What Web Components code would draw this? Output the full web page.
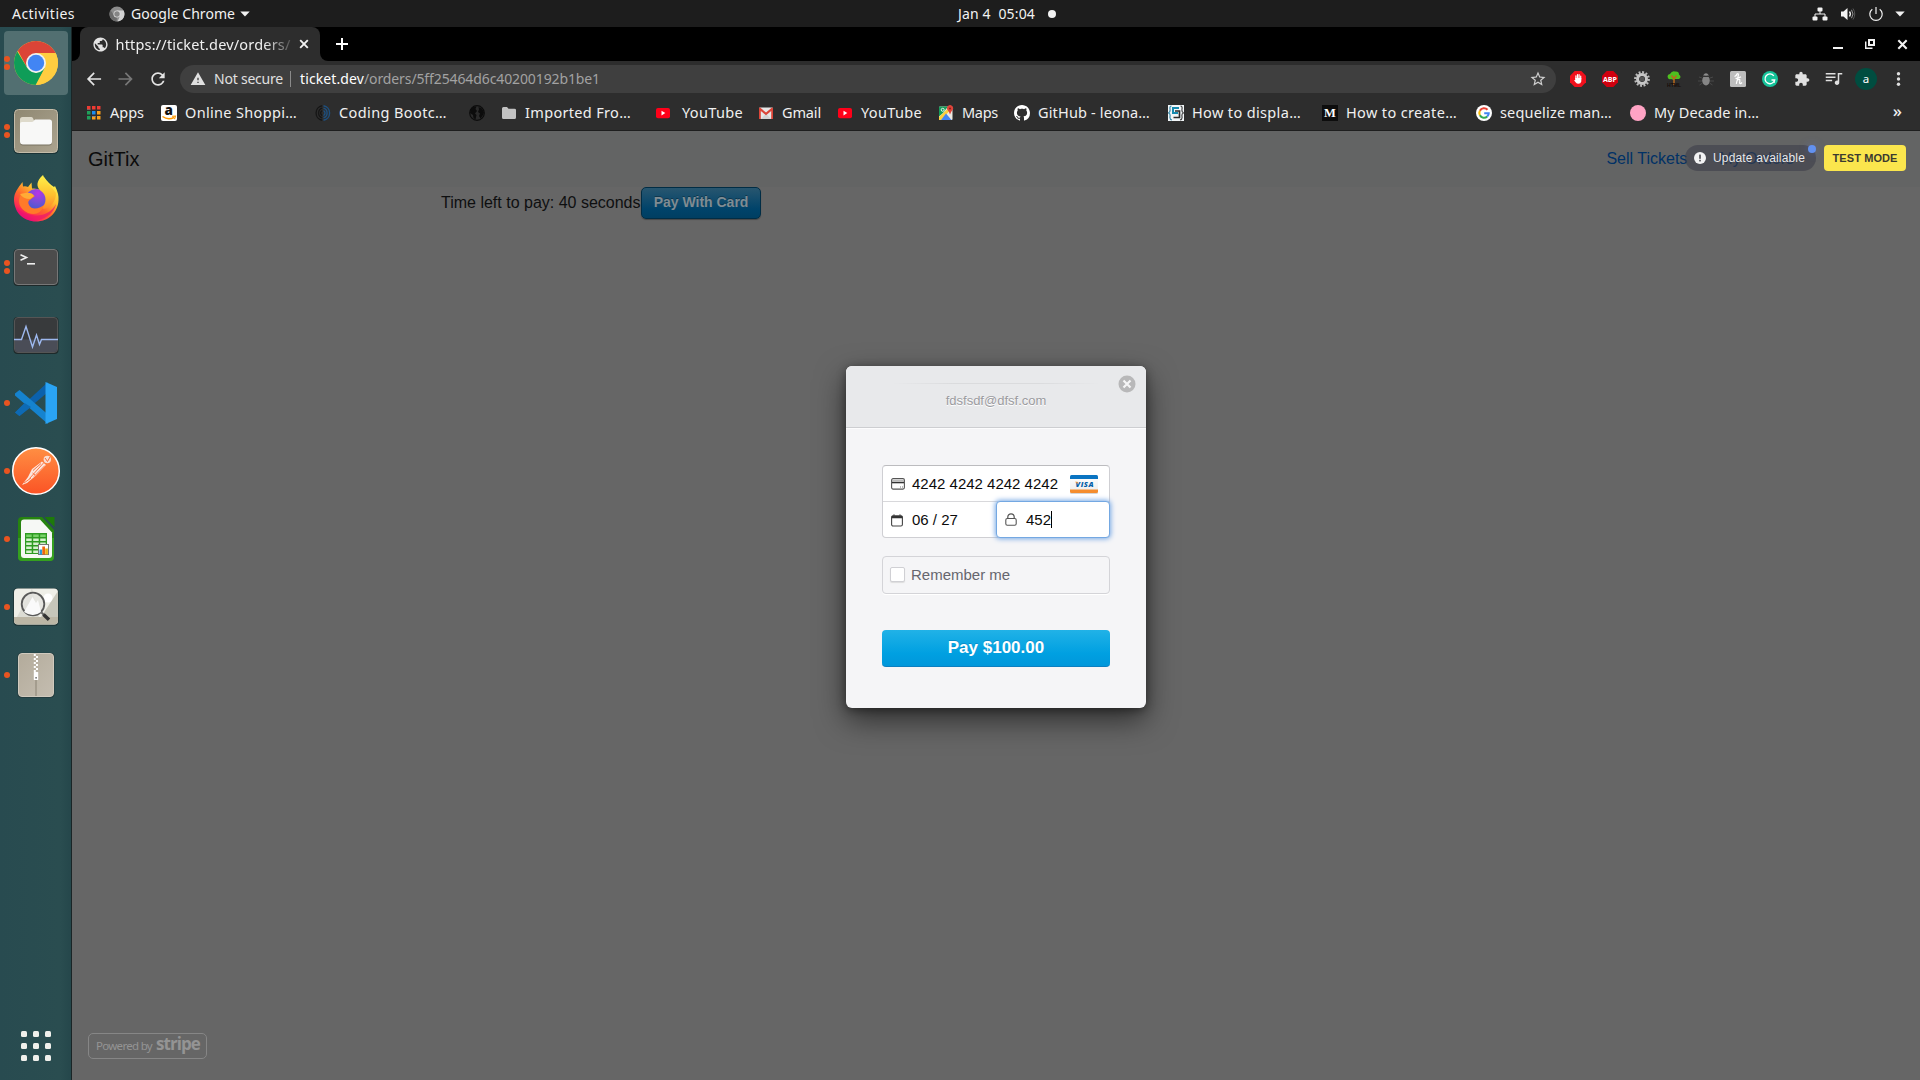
<!DOCTYPE html>
<html lang="en">
<head>
<meta charset="utf-8">
<title>GitTix</title>
<style>
html,body{margin:0;height:100%;overflow:hidden;background:#666;font-family:"Noto Sans","Open Sans",sans-serif}
</style>
</head>
<body>
<desktop-screen></desktop-screen>
<script>
const ICONS = {
  /* dock */
  chrome: ['0 0 64 64', `<clipPath id="c"><circle cx="32" cy="32" r="22"/></clipPath><g clip-path="url(#c)"><rect width="64" height="64" fill="#ffcd40"/><path d="M32 22H60V0H0V16L14 20L23.3 37Z" fill="#db4437"/><path d="M13 20L23.3 37L32 42L41 37L29.500 60H0V18Z" fill="#0f9d58"/><path d="M40.700 37L30 57V60H64V22H32Z" fill="#ffcd40"/></g><circle cx="32" cy="32" r="10" fill="#f1f1f1"/><circle cx="32" cy="32" r="8.200" fill="#4285f4"/>`],
  files: ['0 0 64 64', `<linearGradient id="g" x2="1" y2="1"><stop stop-color="#8f8872"/><stop offset="1" stop-color="#aba38f"/></linearGradient><rect x="9.500" y="10" width="45" height="45" rx="4.500" fill="#1b3336"/><rect x="10.500" y="10.500" width="43" height="43" rx="4" fill="url(#g)" stroke="#c4bca9"/><path d="M16 37V20.500Q16 18 18.500 18H27Q28.500 18 29 19.200L30 21.500H45Q48 21.500 48 24V37Z" fill="#dedacb"/><path d="M16 25.500Q16 24 18 24H27.500Q29 24 30 22.500L31 21H45.500Q48 21 48 23.500V43.500Q48 46.500 45 46.500H19Q16 46.500 16 43.500Z" fill="#787260"/><path d="M16 24.500Q16 23 18 23H27.500Q29 23 30 21.500L31 20.500H45.500Q48 20.500 48 23V42.500Q48 45.500 45 45.500H19Q16 45.500 16 42.500Z" fill="#f8f8f7"/>`],
  firefox: ['0 0 64 64', `<linearGradient id="a" x1=".85" y1=".1" x2=".25" y2=".95"><stop stop-color="#fff44f"/><stop offset=".35" stop-color="#ffbd2f"/><stop offset=".6" stop-color="#ff6a2b"/><stop offset=".85" stop-color="#ff2f50"/><stop offset="1" stop-color="#e3007d"/></linearGradient><radialGradient id="b" cx=".6" cy=".2" r=".9"><stop stop-color="#b833e8"/><stop offset=".5" stop-color="#7450d6"/><stop offset="1" stop-color="#3b5bd0"/></radialGradient><linearGradient id="d" x2="0" y2="1"><stop stop-color="#fff14a"/><stop offset=".6" stop-color="#ffbf2e" /><stop offset="1" stop-color="#ff8a2b"/></linearGradient><path d="M18.500 15L19 19.500Q22 19 24 20L27.500 15.500L28 21.500Q33 21 36 23L40 10Q45 17 50 20L51 19Q55 27 54.500 33C54 46 44 54.500 32 54.500S10 45 10 32.500C10 26 14 21 18.500 15Z" fill="url(#a)"/><path d="M12 42C16 52 27 56 37 52.500C47 49 51 42 52 37C47 46 38 50 28 48Q18 46 12 42Z" fill="#ed146f" opacity=".7"/><circle cx="32" cy="32.500" r="10.500" fill="url(#b)"/><path d="M39 8C32 14 32 20 37 24C43 28 43 37 37 41C44 44 52 36 52 26C47 19 42 16 39 8Z" fill="url(#d)"/><path d="M17 27Q25 27 28 28L31 29L26.500 32.500Q23 34 25 38C28 44 36 41 40 38Q36 50 24 46C15 42 13 34 17 27Z" fill="#ff7a29"/><path d="M16 27L21 26Q28 25 30 29L26 32Q19 32 16 27Z" fill="#ffab36"/>`],
  terminal: ['0 0 64 64', `<rect x="9.500" y="14" width="45" height="37" rx="4" fill="#1e292a"/><rect x="10.500" y="14.500" width="43" height="35" rx="3.500" fill="#4c4c4c" stroke="#777"/><path d="M16.500 19.700L22.500 22.500L16.500 25.300" fill="none" stroke="#eee" stroke-width="1.600"/><rect x="23" y="28" width="8" height="1.600" fill="#eee"/>`],
  monitor: ['0 0 64 64', `<rect x="9.500" y="14" width="45" height="37" rx="4" fill="#1e292a"/><rect x="10.500" y="14.500" width="43" height="35" rx="3.500" fill="#383a3c" stroke="#555"/><path d="M11 36.500H53V46Q53 49 50 49H14Q11 49 11 46Z" fill="#4a4d57"/><path d="M10 36.500H17.500L22 23.500L28.500 44L32.500 32L35.500 41.500L37.500 36.500H54" fill="none" stroke="#9db8ee" stroke-width="1.400"/>`],
  vscode: ['0 0 64 64', `<path d="M11 41.500L15.500 45L44 21V11L11 41.500Z" fill="#0b61ac"/><path d="M11 22.500L15.500 19L44 43.500V53L11 24.500Z" fill="#1583cf"/><path d="M11 41.500L15.500 45L27 36L20.500 32Z" fill="#0e6ab4"/><path d="M41.500 11L53 16V48L41.500 53Z" fill="#2aa4f4"/>`],
  postman: ['0 0 64 64', `<linearGradient id="p" x2="0" y2="1"><stop stop-color="#ff8f43"/><stop offset="1" stop-color="#fb5325"/></linearGradient><circle cx="32" cy="32" r="23.300" fill="url(#p)" stroke="#fff" stroke-width="1.500"/><circle cx="43.300" cy="20.500" r="3.700" fill="#f9ddd0"/><path d="M41 19L43.500 22.500L46 18" stroke="#fb6b35" fill="none"/><path d="M38 22.500L42 26L32 36.500L23 44L18 46L24 38L28 30Z" fill="#fbe6dc"/><path d="M39.500 24L25.500 39.500M37 24.500L29 31.500M41 26.500L30 37.500M28.500 34L31 36M20 44L27 39" stroke="#fa6a35" fill="none" stroke-width=".9"/>`],
  calc: ['0 0 64 64', `<path d="M18 10H38L50 23V50Q50 54 46 54H18Q14 54 14 50V14Q14 10 18 10Z" fill="#26840f"/><path d="M14 31H50V50Q50 54 46 54H18Q14 54 14 50Z" fill="#35a01f"/><path d="M20 12.500H36L48 25.500V48Q48 51 45 51H20Q17 51 17 48V15.500Q17 12.500 20 12.500Z" fill="#f6f8f5"/><path d="M40.500 10H50.500V20Z" fill="#1d7a0a"/><path d="M21 26H43V47H21Z" fill="#2e9b22"/><path d="M22.200 27.500h5.500v2.600h-5.500zm7 0h5.500v2.600h-5.500zm7 0h5.500v2.600h-5.500z" fill="#77d267"/><path d="M22.200 31.500h5.500v2.600h-5.500zm7 0h5.500v2.600h-5.500zm7 0h5.500v2.600h-5.500zm-14 4h5.500v2.600h-5.500zm7 0h5.500v2.600h-5.500zm7 0h5.500v2.600h-5.500zm-14 4h5.500v2.600h-5.500zm7 0h5.500v2.600h-5.500zm-7 4h5.500v2.600h-5.500zm7 0h5.500v2.600h-5.500z" fill="#d5f1cd"/><rect x="34.500" y="37.500" width="10" height="10" fill="#fff" stroke="#777"/><rect x="35.500" y="42.500" width="2.700" height="5" fill="#2b9bd8"/><rect x="38.300" y="39.500" width="2.700" height="8" fill="#f0660e"/><rect x="41.200" y="41.500" width="2.700" height="6" fill="#eeb311"/>`],
  viewer: ['0 0 64 64', `<clipPath id="v"><rect x="10" y="13.500" width="44" height="36" rx="4"/></clipPath><rect x="9" y="13" width="46" height="38" rx="4.500" fill="#20383a"/><g clip-path="url(#v)"><rect x="9" y="13" width="46" height="38" fill="#efefe8"/><path d="M37 42L54 16V42Z" fill="#c7c6ba"/><path d="M28 13.500L13 42H35Z" fill="#dcdcd4"/><path d="M9 42H55V51H9Z" fill="#bcb6a5"/></g><circle cx="44" cy="23" r="4.500" fill="#fff"/><circle cx="29" cy="29" r="11.300" fill="#e4e4df" fill-opacity=".8" stroke="#5a5a5a" stroke-width="1.800"/><path d="M20 37L28.500 22L32 28L34 25L37 37Q29 43 20 37Z" fill="#fafafa"/><path d="M37.500 37.500L40 40" stroke="#666" stroke-width="2"/><path d="M39.500 39.500L45 44.800" stroke="#333" stroke-width="3.500"/>`],
  archive: ['0 0 64 64', `<linearGradient id="z" x2="1" y2="1"><stop stop-color="#b3ab9b"/><stop offset="1" stop-color="#c4bdb0"/></linearGradient><rect x="13.500" y="9.800" width="37" height="45" rx="4" fill="#22393b"/><rect x="14.500" y="10.500" width="35" height="43" rx="3.500" fill="url(#z)" stroke="#d0cabe"/><path d="M32 36V53" stroke="#8a8374" /><path d="M29.800 11h2v2h-2zm2.200 2h2v2h-2zm-2.200 2h2v2h-2zm2.200 2h2v2h-2zm-2.200 2h2v2h-2zm2.200 2h2v2h-2zm-2.200 2h2v2h-2zm2.200 2h2v2h-2zm-2.200 2h2v2h-2z" fill="#fff"/><rect x="29.800" y="29" width="4.400" height="8" rx=".5" fill="#fff"/><rect x="31.300" y="34" width="1.600" height="1.600" fill="#777"/>`],
  grid: ['0 0 30 30', `<g fill="#f0f0ec"><rect width="6" height="6" rx="1.500"/><rect x="12" width="6" height="6" rx="1.500"/><rect x="24" width="6" height="6" rx="1.500"/><rect y="12" width="6" height="6" rx="1.500"/><rect x="12" y="12" width="6" height="6" rx="1.500"/><rect x="24" y="12" width="6" height="6" rx="1.500"/><rect y="24" width="6" height="6" rx="1.500"/><rect x="12" y="24" width="6" height="6" rx="1.500"/><rect x="24" y="24" width="6" height="6" rx="1.500"/></g>`],
  /* top bar */
  chromeGrey: ['0 0 16 16', `<circle cx="8" cy="8" r="7.500" fill="#8c8c8c"/><path d="M8 4.500H14.600A7.500 7.500 0 0 1 8.500 15.500L11 10Z" fill="#d2d2d2"/><path d="M1.500 4L5 9.500L8 11.500L7.500 15.500A7.500 7.500 0 0 1 1.500 4Z" fill="#6b6b6b"/><circle cx="8" cy="8" r="3.500" fill="#ddd"/><circle cx="8" cy="8" r="2.700" fill="#858585"/>`],
  caret: ['0 0 10 6', `<path d="M.3 .5H9.700L5 5.500Z" fill="#f2f2f2"/>`],
  dot: ['0 0 8 8', `<circle cx="4" cy="4" r="4" fill="#f2f2f2"/>`],
  network: ['0 0 16 16', `<g fill="#f2f2f2"><rect x="5.500" y="1.500" width="5" height="4" rx="1"/><rect x=".5" y="10.500" width="5" height="4" rx="1"/><rect x="10.500" y="10.500" width="5" height="4" rx="1"/></g><path d="M8 5V8M3 11V8H13V11" fill="none" stroke="#f2f2f2"/>`],
  volume: ['0 0 16 16', `<path d="M1 5.500H3.500L7.500 2V14L3.500 10.500H1Z" fill="#f2f2f2"/><path d="M9.500 5.500Q11.300 8 9.500 10.500" fill="none" stroke="#f2f2f2" stroke-width="1.300"/><path d="M11.500 3.800Q14.500 8 11.500 12.200" fill="none" stroke="#999"/><path d="M13 2.500Q16.500 8 13 13.500" fill="none" stroke="#555"/>`],
  power: ['0 0 16 16', `<path d="M4.300 3.200A6.200 6.200 0 1 0 11.700 3.200M8 1V8" fill="none" stroke="#f2f2f2" stroke-width="1.200"/>`],
  /* window and toolbar */
  globe: ['0 0 24 24', `<circle cx="12" cy="12" r="9" fill="#2d2d2d"/><path fill="#e4e4e4" d="M12 2C6.480 2 2 6.480 2 12s4.480 10 10 10 10-4.480 10-10S17.520 2 12 2zm-1 17.930c-3.950-.49-7-3.850-7-7.930 0-.62.08-1.210.21-1.790L9 15v1c0 1.100.9 2 2 2v1.930zm6.900-2.540c-.26-.81-1-1.390-1.900-1.390h-1v-3c0-.55-.45-1-1-1H8v-2h2c.55 0 1-.45 1-1V7h2c1.100 0 2-.9 2-2v-.41c2.930 1.190 5 4.060 5 7.410 0 2.080-.8 3.970-2.100 5.390z"/>`],
  x: ['0 0 10 10', `<path d="M1.200 1.200L8.800 8.800M8.800 1.200L1.200 8.800" stroke="#f2f2f2" stroke-width="1.900"/>`],
  plus: ['0 0 12 12', `<path d="M6 0V12M0 6H12" stroke="#fff" stroke-width="2"/>`],
  min: ['0 0 10 10', `<path d="M0 9H10" stroke="#f2f2f2" stroke-width="2"/>`],
  restore: ['0 0 10 10', `<path d="M4 1H9V6H4Z" fill="none" stroke="#f2f2f2" stroke-width="2"/><path d="M.7 2.500V9.300H7.500" fill="none" stroke="#f2f2f2" stroke-width="1.500"/>`],
  back: ['0 0 24 24', `<path fill="#e4e4e4" d="M20.500 11H7.330l5.590-5.590L11.500 4l-8 8 8 8 1.410-1.410L7.330 13H20.500v-2z"/>`],
  forward: ['0 0 24 24', `<path fill="#777" d="M3 11H16.170l-5.590-5.590L12 4l8 8-8 8-1.410-1.410L16.170 13H3v-2z"/>`],
  reload: ['0 0 24 24', `<path fill="#e4e4e4" d="M17.650 6.350C16.200 4.900 14.210 4 12 4c-4.420 0-7.990 3.580-7.990 8s3.570 8 7.990 8c3.730 0 6.840-2.550 7.730-6h-2.080c-.82 2.330-3.040 4-5.650 4-3.310 0-6-2.690-6-6s2.690-6 6-6c1.660 0 3.140.69 4.220 1.780L13 11h7V4l-2.350 2.350z"/>`],
  warn: ['0 0 24 24', `<path fill="#e0e0e0" d="M1 21h22L12 2 1 21zm12-3h-2v-2h2v2zm0-4h-2v-4h2v4z"/>`],
  star: ['0 0 24 24', `<path fill="#d0d0d0" d="M22 9.240l-7.190-.62L12 2 9.190 8.630 2 9.240l5.460 4.730L5.820 21 12 17.270 18.180 21l-1.630-7.030L22 9.240zM12 15.400l-3.760 2.270 1-4.280-3.320-2.880 4.380-.38L12 6.100l1.710 4.040 4.380.38-3.320 2.880 1 4.280L12 15.400z"/>`],
  hand: ['0 0 16 16', `<path d="M4.700 0H11.300L16 4.700V11.300L11.300 16H4.700L0 11.300V4.700Z" fill="#f0101c"/><path d="M5.900 8V4.800M7.500 7.500V3.500M9.100 7.500V3.700M10.700 8V5" stroke="#fff" stroke-width="1.200" stroke-linecap="round"/><path d="M5.300 7H11.300V10.500Q10.700 12.800 8.500 12.800Q6.700 12.800 5.800 11.500L4 9.300L5.300 8.900Z" fill="#fff"/>`],
  abp: ['0 0 16 16', `<path d="M4.700 0H11.300L16 4.700V11.300L11.300 16H4.700L0 11.300V4.700Z" fill="#d0000f"/><text x="8" y="10.600" text-anchor="middle" textLength="14" lengthAdjust="spacingAndGlyphs" font-family="Open Sans,sans-serif" font-weight="700" font-size="7.300" fill="#fff">ABP</text>`],
  gear: ['0 0 16 16', `<circle cx="8" cy="8" r="6.700" fill="none" stroke="#bbb" stroke-width="2.400" stroke-dasharray="1.900 1.600"/><circle cx="8" cy="8" r="4.500" fill="none" stroke="#c6c6c6" stroke-width="3"/><circle cx="8" cy="8" r="2.500" fill="#555"/>`],
  tree: ['0 0 16 16', `<path d="M2 7Q.5 3.500 4 3Q6-.5 9 .5Q13 0 13 3.500Q16 6 13 8H9V6L8 9L5 8Q3 9 2 7Z" fill="#4ec01f"/><path d="M5.500 4.500L8 8L10.500 4.500M8 6V14" stroke="#b9691b" stroke-width="1.500" fill="none"/><text x="8" y="15.500" text-anchor="middle" textLength="14" lengthAdjust="spacingAndGlyphs" font-family="Liberation Sans,sans-serif" font-weight="700" font-size="5.500" fill="#160c08">HTML</text>`],
  bug: ['0 0 16 16', `<ellipse cx="8" cy="9.500" rx="3.800" ry="5" fill="#858585"/><path d="M5 4.500Q8 0 11 4.500Z" fill="#8c8c8c"/><path d="M1 6L4 7M15 6L12 7M0 10H4M16 10H12M1.500 14L4.500 12M14.500 14L11.500 12" stroke="#484848" fill="none"/><path d="M4.300 5.500H11.700" stroke="#333"/>`],
  honey: ['0 0 16 16', `<rect width="16" height="16" rx="1.500" fill="#bdbdbd"/><path d="M4.500 5.500Q6.500 5 7 3Q8.800 2 8.300 4.500L6.300 12.800M6.800 10Q8.300 7.800 9.700 8.500Q10 10 9.600 12.200Q10.500 13.300 12 11.500M5.500 7.300Q9 7.300 11 5.800" stroke="#fff" stroke-width="1.200" fill="none"/>`],
  grammarly: ['0 0 16 16', `<circle cx="8" cy="8" r="8" fill="#15c39a"/><path d="M11.800 4.800A4.900 4.900 0 1 0 12.700 9H9.500M12.300 9V11.800" stroke="#fff" stroke-width="1.300" fill="none"/>`],
  puzzle: ['0 0 24 24', `<path fill="#e0e0e0" d="M20.500 11H19V7c0-1.100-.9-2-2-2h-4V3.500C13 2.120 11.880 1 10.500 1S8 2.120 8 3.500V5H4c-1.100 0-1.990.9-1.990 2v3.800H3.500c1.490 0 2.700 1.210 2.700 2.700s-1.210 2.700-2.700 2.700H2V20c0 1.100.9 2 2 2h3.800v-1.500c0-1.490 1.210-2.700 2.700-2.700 1.490 0 2.700 1.210 2.700 2.700V22H17c1.100 0 2-.9 2-2v-4h1.500c1.380 0 2.500-1.120 2.500-2.500S21.880 11 20.500 11z"/>`],
  queue: ['0 0 24 24', `<path fill="#e0e0e0" d="M14 4H1v2h13V4zm0 4.500H1v2h13v-2zM1 15h8.500v-2H1v2zM17 4v10.180c-.31-.11-.65-.18-1-.18-1.660 0-3 1.340-3 3s1.340 3 3 3 3-1.340 3-3V6h4V4h-6z"/>`],
  avatar: ['0 0 22 22', `<circle cx="11" cy="11" r="11" fill="#004d40"/><text x="11" y="14.500" text-anchor="middle" font-family="Noto Sans,sans-serif" font-size="11.500" fill="#fff">a</text>`],
  more: ['0 0 16 16', `<g fill="#e0e0e0"><circle cx="8.500" cy="2.800" r="1.700"/><circle cx="8.500" cy="8" r="1.700"/><circle cx="8.500" cy="13.200" r="1.700"/></g>`],
  /* bookmarks */
  apps: ['0 0 16 16', `<g><path d="M1 1h3.500v3.500H1zm5 0h3.500v3.500H6zm5 0h3.500v3.500H11z" fill="#ee3b33"/><path d="M1 6h3.500v3.500H1zM1 11h3.500v3.500H1z" fill="#1fa05a"/><path d="M6 6h3.500v3.500H6z" fill="#1a8df0"/><path d="M11 6h3.500v3.500H11zM6 11h3.500v3.500H6zm5 0h3.500v3.500H11z" fill="#f9a01b"/><path d="M6 11h3.500v1H6zM1 4h3.500v.5H1z" fill="#888"/></g>`],
  amazon: ['0 0 16 16', `<rect width="16" height="16" rx="2" fill="#fff"/><text x="7.700" y="10.200" text-anchor="middle" font-family="Open Sans,sans-serif" font-weight="800" font-size="13.500" fill="#111">a</text><path d="M1.500 11.500Q7 15.500 13 12.500" stroke="#f90" stroke-width="1.500" fill="none"/><path d="M11 11.300L14.500 11L13.500 14.200" stroke="#f90" stroke-width="1.100" fill="none"/>`],
  coding: ['0 0 16 16', `<g fill="none" stroke-width="1.400"><path d="M7.200 .8A7.300 7.300 0 0 0 7.200 15.200M7.200 3.200A5 5 0 0 0 7.200 12.800M7.200 5.500A2.800 2.800 0 0 0 7.200 10.500" stroke="#161616"/><path d="M8.500 .8A7.300 7.300 0 0 1 8.500 15.200M8.500 3.200A5 5 0 0 1 8.500 12.800M8.500 5.500A2.800 2.800 0 0 1 8.500 10.500" stroke="#1d5080"/></g>`],
  darkglobe: ['0 0 16 16', `<circle cx="8" cy="8" r="7.300" fill="#2a2a2a" stroke="#0c0c0c" stroke-width="1.200"/><path d="M2 3.500Q5 1 7.500 1.500L6.500 4L8 6L6 8.500L7.500 10L6.500 14.500L4.500 13L4 10L1 8ZM9.500 2L13 3.500L15 7.500L13.500 11L11.500 13.500L10 11L11 8.500L9 7L10 4.500Z" fill="#0c0c0c"/>`],
  folder: ['0 0 16 16', `<path d="M1 3.500Q1 2 2.500 2H6L7.500 3.700H13.500Q15 3.700 15 5V12.500Q15 14 13.500 14H2.500Q1 14 1 12.500Z" fill="#c2c2c2"/>`],
  youtube: ['0 0 16 16', `<rect x="1" y="3" width="14" height="10.200" rx="2" fill="#ff0019"/><path d="M6.500 5.800L10.300 8.100L6.500 10.400Z" fill="#fff"/>`],
  gmail: ['0 0 16 16', `<rect x="1" y="2.500" width="14" height="11.500" rx="1" fill="#e6e6e6"/><path d="M3 14L8 8.500L13 14Z" fill="#d2d2d2"/><path d="M1 3.500Q1 2.500 2 2.500L8 7.500L14 2.500Q15 2.500 15 3.500V14H13.200V6L8 10.200L2.800 6V14H1Z" fill="#dc4538"/>`],
  maps: ['0 0 16 16', `<rect x="1" y="1.500" width="13.500" height="13.500" rx="1" fill="#ece9e1"/><path d="M1 2.500Q1 1.500 2 1.500H10L5 8L1 11.500Z" fill="#169c5b"/><path d="M1 12L9.500 4L11.500 6L3 15H1Z" fill="#fdd03e"/><path d="M8 8.500L3 15H13.500Z" fill="#4384f3"/><circle cx="4.700" cy="4.800" r="1.500" fill="none" stroke="#e8f4ee"/><path d="M12 9.500Q11.700 7.500 9.800 5.200A3 3 0 1 1 14.300 5.200Q12.400 7.500 12 9.500Z" fill="#e0443a"/><circle cx="12" cy="3.400" r="1" fill="#871d15"/>`],
  github: ['0 0 16 16', `<path fill="#fff" d="M8 0C3.580 0 0 3.580 0 8c0 3.540 2.290 6.530 5.470 7.590.4.070.55-.17.55-.38 0-.19-.01-.82-.01-1.490-2.010.37-2.530-.49-2.690-.94-.09-.23-.48-.94-.82-1.130-.28-.15-.68-.52-.01-.53.63-.01 1.080.58 1.230.82.72 1.210 1.870.87 2.330.66.070-.52.28-.87.51-1.070-1.780-.2-3.640-.89-3.640-3.950 0-.87.31-1.590.82-2.150-.08-.2-.36-1.020.08-2.120 0 0 .67-.21 2.200.82.64-.18 1.320-.27 2-.27s1.360.09 2 .27c1.530-1.040 2.200-.82 2.200-.82.44 1.100.16 1.920.08 2.120.51.56.82 1.270.82 2.150 0 3.070-1.870 3.750-3.650 3.950.29.25.54.73.54 1.480 0 1.070-.01 1.930-.01 2.200 0 .21.15.46.55.38A8.010 8.010 0 0 0 16 8c0-4.420-3.580-8-8-8z"/>`],
  display: ['0 0 16 16', `<rect width="16" height="16" fill="#f2f6f8"/><path d="M3.500 1Q1.500 1 2 4T.5 8Q2.500 8.500 2 11.500T4 15" stroke="#3b8bab" fill="none" stroke-width="1.200"/><path d="M12.500 1Q14.500 1 14 4T15.500 8Q13.500 8.500 14 11.500T12 15" stroke="#444" fill="none" stroke-width="1.200"/><path d="M11 3H5V8H10" stroke="#168bb0" fill="none" stroke-width="2"/><path d="M7 6H11.500V12.500H5.500" stroke="#2c2c2c" fill="none" stroke-width="1.700"/>`],
  medium: ['0 0 16 16', `<rect width="16" height="16" fill="#0d0d0d"/><text x="8" y="12.300" text-anchor="middle" font-family="Liberation Serif,serif" font-weight="700" font-size="12.500" fill="#fff">M</text>`],
  google: ['0 0 16 16', `<circle cx="8" cy="8" r="8" fill="#fff"/><g fill="none" stroke-width="2.100"><path d="M11.500 4.700A4.700 4.700 0 0 0 3.900 5.700" stroke="#ea4335"/><path d="M3.900 5.700A4.700 4.700 0 0 0 3.900 10.300" stroke="#fbbc05"/><path d="M3.900 10.300A4.700 4.700 0 0 0 11.200 11.500" stroke="#34a853"/><path d="M11.200 11.500A4.700 4.700 0 0 0 12.700 8.200H8.200" stroke="#4285f4"/></g>`],
  pink: ['0 0 16 16', `<circle cx="8" cy="8" r="8" fill="#ffa3c4"/>`],
  /* checkout */
  info: ['0 0 12 12', `<circle cx="6" cy="6" r="6" fill="#f2f2f3"/><rect x="5.200" y="2.600" width="1.600" height="4.200" fill="#4a4a50"/><rect x="5.200" y="7.800" width="1.600" height="1.600" fill="#4a4a50"/>`],
  close: ['0 0 18 18', `<circle cx="9" cy="9" r="8.500" fill="#b8b8b9"/><path d="M5.500 5.500L12.500 12.500M12.500 5.500L5.500 12.500" stroke="#f5f5f6" stroke-width="2.200"/>`],
  card: ['0 0 14 12', `<rect x=".6" y=".6" width="12.800" height="10.500" rx="1.500" fill="#fff" stroke="#555" stroke-width="1.100"/><path d="M1 2.500H13" stroke="#bbb"/><path d="M1 4.500H13" stroke="#333" stroke-width="1.600"/><path d="M9 9H10M11 9H12" stroke="#777"/>`],
  calendar: ['0 0 12 13', `<rect x=".6" y="2" width="10.800" height="10" rx="1.500" fill="#fff" stroke="#444" stroke-width="1.100"/><path d="M.5 2.500Q.5 1.500 1.500 1.500H10.500Q11.500 1.500 11.500 2.500V4.300H.5Z" fill="#333"/><path d="M3 .3V2.500M9 .3V2.500" stroke="#444"/>`],
  lock: ['0 0 12 13', `<rect x=".8" y="5.500" width="10.400" height="6.700" rx="1.500" fill="#fff" stroke="#555" stroke-width="1.100"/><path d="M2.800 5.500V4A3.200 3.200 0 0 1 9.200 4V5.500" stroke="#555" fill="none" stroke-width="1.200"/>`],
  visa: ['0 0 30 21', `<linearGradient id="w" x2="0" y2="1"><stop stop-color="#fff"/><stop offset="1" stop-color="#ececec"/></linearGradient><rect x="1" y="1.500" width="28" height="18.500" rx="1.500" fill="#bbb" opacity=".6"/><rect x="1" y="1" width="28" height="18" rx="1.500" fill="url(#w)"/><path d="M1 5V2.500Q1 1 2.500 1H27.500Q29 1 29 2.500V5Z" fill="#0a74c2"/><path d="M1 15.500H29V17.500Q29 19 27.500 19H2.500Q1 19 1 17.500Z" fill="#f58d2e"/><text x="15.500" y="13" text-anchor="middle" textLength="18" font-family="Open Sans,sans-serif" font-weight="800" font-style="italic" font-size="7.500" fill="#0460a8">VISA</text><path d="M6 7.800H8.500L8.800 10Z" fill="#f5932f"/>`]
};

const define = (name, html, init) => {
  const tpl = document.createElement('template');
  tpl.innerHTML = html;
  customElements.define(name, class extends HTMLElement {
    connectedCallback() {
      if (this.shadowRoot) return;
      this.attachShadow({ mode: 'open' }).append(tpl.content.cloneNode(true));
      if (init) init(this, this.shadowRoot);
    }
  });
};

/* <ui-icon name w h> */
define('ui-icon', `<style>:host{display:block;flex:none}svg{display:block;width:100%;height:100%}</style>`, (el, root) => {
  const [box, body] = ICONS[el.getAttribute('name')];
  const w = el.getAttribute('w') || 16, h = el.getAttribute('h') || w;
  el.style.width = w + 'px'; el.style.height = h + 'px';
  root.innerHTML += `<svg viewBox="${box}">${body}</svg>`;
});

/* Text tracked out or in to a given width: <ui-text w="62"> */
define('ui-text', `<style>:host{display:block;flex:none;white-space:pre}span{display:inline-block}</style><span><slot></slot></span>`, (el, root) => {
  const w = +el.getAttribute('w');
  if (!w) return;
  el.style.width = w + 'px';
  const s = root.querySelector('span');
  s.style.letterSpacing = '0';
  s.style.letterSpacing = ((w - s.getBoundingClientRect().width) / el.textContent.length) + 'px';
});

define('top-bar', `<style>
:host{display:flex;align-items:center;height:27px;flex:none;background:#1d1d1d;color:#f2f2f2;font-size:14px;line-height:26px;justify-content:space-between}
div{display:flex;align-items:center;height:26px}
.l{width:880px;padding-left:12px}.c{flex:1;padding-left:66px;gap:13px}.r{padding-right:15px}
</style>
<div class="l"><ui-text w="63">Activities</ui-text><ui-icon name="chromeGrey" w="16" style="margin-left:34px"></ui-icon><ui-text w="104" style="margin-left:6px">Google Chrome</ui-text><ui-icon name="caret" w="10" h="6" style="margin-left:5px"></ui-icon></div>
<div class="c"><ui-text w="77">Jan 4  05:04</ui-text><ui-icon name="dot" w="8"></ui-icon></div>
<div class="r"><ui-icon name="network"></ui-icon><ui-icon name="volume" style="margin-left:12px"></ui-icon><ui-icon name="power" style="margin-left:12px"></ui-icon><ui-icon name="caret" w="10" h="6" style="margin-left:11px"></ui-icon></div>`);

define('side-dock', `<style>
:host{display:flex;flex-direction:column;flex:none;border-right:1px solid #1a2526;background:linear-gradient(90deg,#284b50,#2a4d50 85%,#25474b);padding-top:4px;box-sizing:border-box;width:72px}
.apps{margin:auto 0 19px 21px}
</style><slot></slot><ui-icon class="apps" name="grid" w="30"></ui-icon>`);
customElements.define('dock-list', class extends HTMLElement {
  connectedCallback() {
    this.attachShadow({ mode: 'open' });
    const items = [['chrome', 2], ['files', 2], ['firefox', 0], ['terminal', 2], ['monitor', 0], ['vscode', 1], ['postman', 1], ['calc', 1], ['viewer', 1], ['archive', 1]];
    this.shadowRoot.innerHTML = `<style>:host{display:flex;flex-direction:column}</style>` +
      items.map(([n, r], i) => `<app-launcher icon="${n}" running="${r}"${i ? '' : ' active'}></app-launcher>`).join('');
  }
});
customElements.define('app-launcher', class extends HTMLElement {
  connectedCallback() {
    this.attachShadow({ mode: 'open' });
    this.shadowRoot.innerHTML = `<style>
      :host{display:flex;height:64px;margin-bottom:4px;align-items:center}
      .run{width:4px;flex:none;display:flex;flex-direction:column;gap:2.700px;z-index:1}
      i{display:block;width:6px;height:6px;border-radius:3px;background:#e95420;margin-left:4px}
      .tile{width:64px;height:64px;border-radius:4px;flex:none}
      :host([active]) .tile{background:#526f71}
      </style><div class="run">${'<i></i>'.repeat(+this.getAttribute('running'))}</div><div class="tile"><ui-icon name="${this.getAttribute('icon')}" w="64"></ui-icon></div>`;
  }
});

define('tab-strip', `<style>
:host{display:flex;height:34px;background:#000;align-items:stretch;color:#f0f0f0;font-size:14.500px;flex:none}
.lead,.trail{width:8px;background:#2d2d2d;flex:none}
.lead::before,.trail::before{content:"";display:block;height:34px;background:#000}
.lead::before{border-bottom-right-radius:8px}.trail::before{border-bottom-left-radius:8px}
.tab{width:240px;box-sizing:border-box;background:#2d2d2d;border-radius:8px 8px 0 0;display:flex;align-items:center;padding-left:11.500px}
.title{width:176px;margin-left:7px;margin-top:-1px;-webkit-mask:linear-gradient(90deg,#000 84%,rgba(0,0,0,.15) 100%)}
.ctl{margin-left:auto;display:flex;align-items:center;padding-right:12.500px}
.plus{align-self:center;margin-left:8px}
</style><div class="lead"></div><div class="tab"><ui-icon name="globe" w="17"></ui-icon><div class="title"><ui-text w="175">https://ticket.dev/orders/</ui-text></div><ui-icon name="x" w="10" style="margin-left:7.500px"></ui-icon></div><div class="trail"></div><ui-icon class="plus" name="plus" w="12"></ui-icon>
<div class="ctl"><ui-icon name="min" w="10"></ui-icon><ui-icon name="restore" w="10" style="margin-left:22px"></ui-icon><ui-icon name="x" w="11" style="margin-left:22px"></ui-icon></div>`);

define('tool-bar', `<style>
:host{display:flex;height:36px;background:#2d2d2d;align-items:center;flex:none;padding:0 14px 0 12px;font-size:14px}
.omni{flex:1;height:28px;border-radius:14px;background:#3f3f3f;display:flex;align-items:center;margin-left:12px;padding:0 9px 0 10px;color:#e0e0e0;margin-right:14px;line-height:28px}
.sep{width:1px;height:16px;background:#8a8a8a;margin:0 9px 0 7px}
.ext{display:flex;gap:16px;align-items:center}
</style>
<ui-icon name="back" w="20"></ui-icon><ui-icon name="forward" w="20" style="margin-left:12px"></ui-icon><ui-icon name="reload" w="20" style="margin-left:12px"></ui-icon>
<div class="omni"><ui-icon name="warn" w="16"></ui-icon><ui-text w="69" style="margin-left:8px">Not secure</ui-text><div class="sep"></div><ui-text w="64" style="color:#fff">ticket.dev</ui-text><ui-text w="236" style="color:#a2a2a2">/orders/5ff25464d6c40200192b1be1</ui-text><ui-icon name="star" w="18" style="margin-left:auto"></ui-icon></div>
<div class="ext"><ui-icon name="hand"></ui-icon><ui-icon name="abp"></ui-icon><ui-icon name="gear"></ui-icon><ui-icon name="tree"></ui-icon><ui-icon name="bug"></ui-icon><ui-icon name="honey"></ui-icon><ui-icon name="grammarly"></ui-icon><ui-icon name="puzzle"></ui-icon><ui-icon name="queue" w="18" style="margin:0 -1px"></ui-icon><ui-icon name="avatar" w="22" style="margin:0 -3px"></ui-icon><ui-icon name="more"></ui-icon></div>`);

customElements.define('bookmark-bar', class extends HTMLElement {
  connectedCallback() {
    this.attachShadow({ mode: 'open' });
    const b = [['apps', 75, 34, 'Apps'], ['amazon', 154, 112, 'Online Shoppi…'], ['coding', 154, 108, 'Coding Bootc…'], ['darkglobe', 32, 0, ''], ['folder', 154, 106, 'Imported Fro…'], ['youtube', 103, 61, 'YouTube', 11], ['gmail', 79, 39, 'Gmail', 8], ['youtube', 101, 61, 'YouTube'], ['maps', 76, 36, 'Maps'], ['github', 154, 112, 'GitHub - leona…'], ['display', 154, 109, 'How to displa…'], ['medium', 154, 111, 'How to create…'], ['google', 154, 112, 'sequelize man…'], ['pink', 154, 105, 'My Decade in…']];
    this.shadowRoot.innerHTML = `<style>
      :host{display:flex;height:32px;padding-bottom:1px;background:#2d2d2d;border-bottom:1px solid #1e1e1e;align-items:center;padding-left:14px;padding-right:18px;font-size:14.500px;line-height:28px;color:#f0f0f0;flex:none}
      div{display:flex;align-items:center;flex:none}
      ui-text{margin-top:-2px}
      .more{margin-left:auto;font-size:17px;font-weight:500;margin-top:-5px}
      </style>` + b.map(([i, w, t, s, g = 8]) => `<div style="width:${w}px;gap:${g}px"><ui-icon name="${i}"></ui-icon>${s ? `<ui-text w="${t}">${s}</ui-text>` : ''}</div>`).join('') + `<span class="more">»</span>`;
  }
});

define('checkout-badges', `<style>
:host{display:flex;gap:8px;position:absolute;right:14px;top:14px;font:12px/26px "Liberation Sans",sans-serif}
.pill{width:131px;box-sizing:border-box;height:26px;border-radius:13px;background:rgba(60,61,72,.58);color:#e9e9ec;display:flex;align-items:center;padding-left:9px;gap:7px;position:relative;text-shadow:0 0 1px rgba(0,0,0,.3)}
.pill b{position:absolute;right:0;top:0;width:8px;height:8px;border-radius:4px;background:#6291f0;box-shadow:0 0 10px rgba(90,120,230,.4)}
.test{width:82px;height:26px;border-radius:4px;background:#fbe64d;color:#3b3a30;font-weight:700;font-size:11px;display:flex;justify-content:center}
</style><div class="pill"><ui-icon name="info" w="12"></ui-icon><ui-text w="92">Update available</ui-text><b></b></div><div class="test"><ui-text w="65">TEST MODE</ui-text></div>`);

define('site-page', `<style>
:host{display:flex;flex-direction:column;flex:1;background:#666;position:relative;font:16px/24px "Liberation Sans",sans-serif;color:#0e0f10}
nav{height:56px;box-sizing:border-box;background:#636464;display:flex;align-items:center;padding:0 126px 0 16px;justify-content:space-between}
.brand{font-size:20px;line-height:30px;color:#0b0b0b}
.links{display:flex;gap:32px;color:#003166}
main{width:1110px;margin:0 auto;display:flex;align-items:flex-start}
button{font:700 14px/29px "Liberation Sans",sans-serif;width:120px;height:32px;padding:0 0 1px 1px;border:1px solid #012d45;border-radius:5px;background:linear-gradient(#28566f,#00436a 70%,#003f62);color:#7f8c93;text-shadow:0 -1px 0 rgba(0,0,0,.3);box-shadow:0 1px 1px rgba(0,0,0,.3)}
.by{margin:auto 0 21px 16px;width:119px;height:26px;box-sizing:border-box;border:1px solid #868686;border-radius:5px;display:flex;align-items:center;padding:0 0 0 7px;color:#949494;font:11.500px/22px "Noto Sans",sans-serif;gap:4px}
.by ui-text{margin-top:-1px}
.by ui-text+ui-text{font:700 17px/22px "Open Sans",sans-serif;margin-top:-4px}
</style><nav><span class="brand">GitTix</span><span class="links"><span>Sell Tickets</span><span>My Orders</span></span></nav>
<main><span style="padding-top:4px">Time left to pay: 40 seconds</span><button>Pay With Card</button></main>
<div class="by"><ui-text w="56">Powered by</ui-text><ui-text w="44">stripe</ui-text></div>
<checkout-badges></checkout-badges><checkout-dialog></checkout-dialog>`);

define('card-field', `<style>
:host{display:flex;align-items:center;box-sizing:border-box;height:36px;color:#0c0c0c;font-size:15px;line-height:20px}
.ic{width:17px;display:flex;margin-right:4px}
</style><div class="ic"><slot name="icon"></slot></div><slot></slot>`);

define('checkout-dialog', `<style>
:host{display:block;position:absolute;left:774px;top:235px;width:300px;height:342px;border-radius:6px;background:#f5f5f7;box-shadow:0 12px 30px rgba(0,0,0,.55),0 2px 10px rgba(0,0,0,.4);font-family:"Liberation Sans",sans-serif}
header{height:61px;background:#e8e9eb;border-bottom:1px solid #cdced1;border-radius:6px 6px 0 0;text-align:center;box-shadow:0 1px 0 #fcfcfd}
.rule{height:1px;margin:0 46px;position:relative;top:17px;background:linear-gradient(90deg,transparent,#dadbdd 30%,#dadbdd 70%,transparent)}
.mail{font-size:13px;line-height:16px;color:#9b9b9f;text-shadow:0 1px 0 #fff;padding-top:26px}
.x{position:absolute;right:10px;top:9px}
.form{margin:37px 36px 0;width:228px;height:73px;box-sizing:border-box;border:1px solid #cfcfd3;border-top-color:#bcbcbf;border-radius:4px;background:#fff;display:grid;grid-template-columns:113px 113px;grid-template-rows:36px 35px}
.num{grid-column:1/3;border-bottom:1px solid #d8d8db;padding-left:8px}
.exp{padding-left:8px}
.cvc{position:relative;margin:-1px -1px -1px 0;padding-left:8px;border:1px solid #74a8e2;border-radius:4px;background:#fff;box-shadow:0 0 5px 1px #7aaae6;height:37px;width:114px}
.cvc i{width:1px;height:17px;background:#000}
.rem{margin:18px 36px 0;width:228px;height:38px;box-sizing:border-box;border:1px solid #d4d4d8;border-radius:4px;display:flex;align-items:center;padding-left:7px;gap:6px;color:#66666e;font-size:15px;box-shadow:0 1px 0 #fff}
.rem i{width:13px;height:13px;border:1px solid #d0d0d4;border-radius:2px;background:#fff;box-shadow:0 1px 1px #ddd;margin-top:-1px}
button{display:block;margin:36px 36px 0;width:228px;height:37px;border:0;border-bottom:1px solid #0b7fc0;border-radius:4px;background:linear-gradient(#21b2e7,#00a0e1 65%,#0097db);color:#fff;font:700 17px/34px "Liberation Sans",sans-serif;padding:0;text-shadow:0 -1px 0 rgba(0,70,130,.3)}
</style>
<header><div class="rule"></div><div class="mail">fdsfsdf@dfsf.com</div></header>
<ui-icon class="x" name="close" w="18"></ui-icon>
<div class="form"><card-field class="num"><ui-icon slot="icon" name="card" w="14" h="12"></ui-icon><span>4242 4242 4242 4242</span><ui-icon name="visa" w="30" h="21" style="margin:2px 0 0 11px"></ui-icon></card-field>
<card-field class="exp"><ui-icon slot="icon" name="calendar" w="12" h="13"></ui-icon><span>06 / 27</span></card-field>
<card-field class="cvc"><ui-icon slot="icon" name="lock" w="12" h="13"></ui-icon><span>452</span><i></i></card-field></div>
<div class="rem"><i></i><span>Remember me</span></div>
<button>Pay $100.00</button>`);

define('chrome-window', `<style>:host{display:flex;flex-direction:column;flex:1;min-width:0}</style><tab-strip></tab-strip><tool-bar></tool-bar><bookmark-bar></bookmark-bar><site-page></site-page>`);
define('desktop-screen', `<style>:host{display:flex;flex-direction:column;width:1920px;height:1080px;overflow:hidden}.row{display:flex;flex:1;min-height:0}</style><top-bar></top-bar><div class="row"><side-dock><dock-list></dock-list></side-dock><chrome-window></chrome-window></div>`);
</script>
</body>
</html>
